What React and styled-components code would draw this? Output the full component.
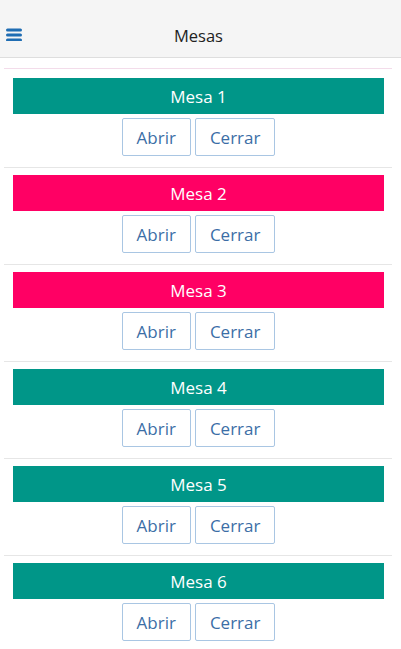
import React from 'react';
import styled, { createGlobalStyle } from 'styled-components';

const GlobalStyle = createGlobalStyle`
  body {
    margin: 0;
    background: #ffffff;
    font-family: "Open Sans", "Noto Sans", sans-serif;
  }
`;

// Top bar
const Header = styled.header`
  position: relative;
  height: 57px;
  background: #f5f5f5;
  border-bottom: 1px solid #dedede;
  display: flex;
  align-items: center;
  justify-content: center;
`;

const MenuButton = styled.button`
  position: absolute;
  left: 5px;
  top: 27px;
  padding: 0;
  border: 0;
  background: none;
  display: flex;
`;

const Title = styled.h1`
  margin: 0;
  padding: 14px 4px 0 0;
  font-size: 16.5px;
  font-weight: 400;
  color: #222;
`;

const List = styled.div`
  padding: 10px 9px 0 4px;
`;

const Item = styled.section`
  border-top: 1px solid #e6e6e6;
  padding: 7px 8px 11px 9px;
  display: flex;
  flex-direction: column;
  gap: 4px;

  &:first-child {
    border-top-color: #f3dcea;
    padding-top: 9px;
  }
`;

const TableBar = styled.div`
  height: 36px;
  background: ${(p) => (p.$busy ? '#ff0064' : '#009688')};
  color: #fff;
  font-size: 17px;
  display: flex;
  align-items: center;
  justify-content: center;
`;

const Actions = styled.div`
  display: flex;
  justify-content: center;
  gap: 4px;
`;

const ActionButton = styled.button`
  height: 38px;
  padding: 0 14px;
  background: #fff;
  border: 1px solid #a9c6e3;
  border-radius: 2px;
  color: #3b6ea6;
  font-family: inherit;
  font-size: 17px;
`;

const tables = [
  { id: 1, busy: false },
  { id: 2, busy: true },
  { id: 3, busy: true },
  { id: 4, busy: false },
  { id: 5, busy: false },
  { id: 6, busy: false },
];

function MenuIcon() {
  return (
    <svg width="18" height="14" viewBox="0 0 18 14">
      <g stroke="#1f6db3" strokeWidth="3" strokeLinecap="round">
        <line x1="2.5" y1="3" x2="15.5" y2="3" />
        <line x1="2.5" y1="8" x2="15.5" y2="8" />
        <line x1="2.5" y1="13" x2="15.5" y2="13" />
      </g>
    </svg>
  );
}

export default function App() {
  return (
    <>
      <GlobalStyle />
      <Header>
        <MenuButton aria-label="menu">
          <MenuIcon />
        </MenuButton>
        <Title>Mesas</Title>
      </Header>
      <List>
        {tables.map((t) => (
          <Item key={t.id}>
            <TableBar $busy={t.busy}>Mesa {t.id}</TableBar>
            <Actions>
              <ActionButton>Abrir</ActionButton>
              <ActionButton>Cerrar</ActionButton>
            </Actions>
          </Item>
        ))}
      </List>
    </>
  );
}
